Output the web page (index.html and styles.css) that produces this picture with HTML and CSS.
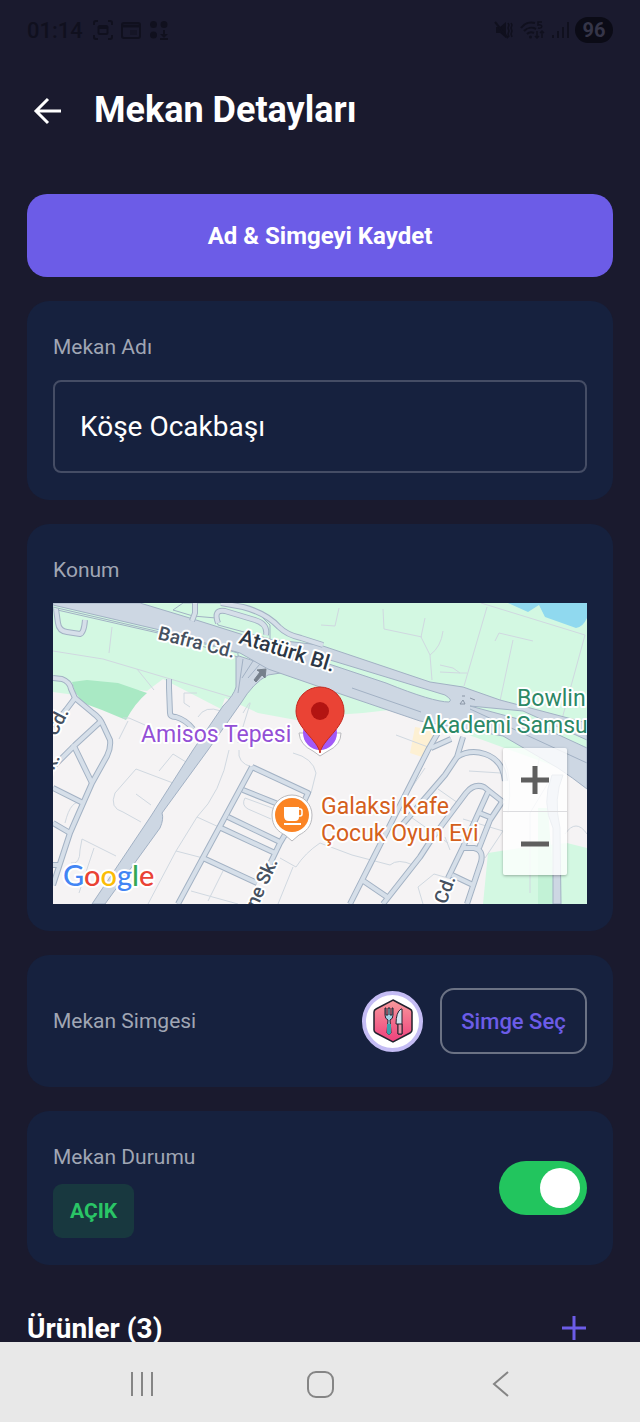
FILE: index.html
```html
<!DOCTYPE html>
<html lang="tr">
<head>
  <meta charset="UTF-8" />
  <meta name="viewport" content="width=device-width, initial-scale=1.0" />
  <title>Mekan Detayları</title>
  <link rel="stylesheet" href="styles.css">
</head>
<body>
  <!-- Status Bar -->
  <div class="status-bar">
    <div class="status-left">
      <span class="time">01:14</span>
      <svg width="22" height="22" viewBox="0 0 22 22" fill="none" stroke="currentColor" stroke-width="2">
        <path d="M2 6V4a2 2 0 0 1 2-2h2M16 2h2a2 2 0 0 1 2 2v2M20 16v2a2 2 0 0 1-2 2h-2M6 20H4a2 2 0 0 1-2-2v-2" />
        <rect x="6.500" y="7" width="9" height="8" rx="1.500" />
        <path d="M7 9h8" />
      </svg>
      <svg width="22" height="22" viewBox="0 0 22 22" fill="none" stroke="currentColor" stroke-width="2">
        <rect x="2" y="4" width="18" height="15" rx="2" />
        <path d="M2 7h18" stroke-width="3" />
        <rect x="10" y="11" width="7" height="5" fill="currentColor" stroke="none" opacity="0.5" />
      </svg>
      <svg width="22" height="22" viewBox="0 0 22 22" fill="currentColor">
        <circle cx="5.500" cy="5.500" r="3.500" />
        <circle cx="16" cy="5.500" r="3.500" />
        <circle cx="5.500" cy="16" r="3.500" />
        <path d="M15 11h2v4h3l-4 4-4-4h3zM12 19h8v2h-8z" />
      </svg>
    </div>
    <div class="status-right">
      <svg width="20" height="22" viewBox="0 0 20 22" fill="currentColor">
        <path d="M3 8h4l6-5v16l-6-5H3z" />
        <path d="M2 3l13 16" stroke="currentColor" stroke-width="2" />
        <path d="M15 4l1 2-1 3 1 3-1 3 1 3M18 4l1 2-1 3 1 3-1 3 1 3" fill="none" stroke="currentColor" stroke-width="1.500" />
      </svg>
      <svg width="26" height="22" viewBox="0 0 26 22" fill="none" stroke="currentColor" stroke-width="2">
        <path d="M2 9a13 13 0 0 1 14-5M5 12a10 10 0 0 1 12-2M8 15a6 6 0 0 1 7-1" />
        <circle cx="11.500" cy="18" r="1.500" fill="currentColor" stroke="none" />
        <path d="M23 3h-4v3c5-1 5 4 0 3M18 12v7M16 17l2 2 2-2M23 19v-7M21 14l2-2 2 2" stroke-width="1.500" />
      </svg>
      <svg width="18" height="22" viewBox="0 0 18 22" stroke="currentColor" stroke-width="2">
        <path d="M2 19v-3M7 19v-7M12 19V8M17 19V3" />
      </svg>
      <span class="battery">96</span>
    </div>
  </div>

  <!-- Header -->
  <header class="header">
    <a href="#" class="back-btn" aria-label="Geri">
      <svg width="32" height="32" viewBox="0 0 32 32" fill="none" stroke="#fff" stroke-width="3">
        <path d="M29 17H4M16 5L4 17l12 12" />
      </svg>
    </a>
    <h1 class="title">Mekan Detayları</h1>
  </header>

  <main class="content">
    <button type="button" class="save-btn">Ad &amp; Simgeyi Kaydet</button>

    <!-- Name -->
    <section class="card">
      <label class="label" for="place-name">Mekan Adı</label>
      <input type="text" id="place-name" class="name-input" value="Köşe Ocakbaşı">
    </section>

    <!-- Location -->
    <section class="card">
      <h2 class="label">Konum</h2>
      <div class="map">
        <svg class="map-svg" viewBox="0 0 534 301" preserveAspectRatio="xMidYMid slice">
          <defs>
            <g id="streets">
              <path d="M0 75L9 76Q17 79 18 86L22 95L40 110Q47 115 50 122L57 137Q58 145 54 153L39 180L17 230L0 282" />
              <path d="M22 95L13 107L0 123M47 119L22 142L0 164M20 141L39 180M0 185L30 200M0 220L17 230M0 262H5" />
              <path d="M116 76V85L117 110Q117 114 123 114Q133 117 140 126" />
              <path d="M199 164L255 190L248 205L227 240L215 265M199 164L125 301M190 187L230 203M175 214L227 239M168 225L222 250M150 255L204 280" />
              <path d="M386 128L375 147L297 301M410 134L404 154L392 172L349 222M309 277L334 294" />
              <path d="M378 145L398 136M404 154Q417 146 432 151Q450 157 452 178" />
              <path d="M330 301L367 254L380 234L413 190Q421 180 431 184L450 199" />
              <path d="M435 189L410 244L395 275M449 199L437 217L426 245M424 209L439 215M410 245H421Q431 247 428 259L414 301M399 272L420 282" />
            </g>
            <g id="ramps">
              <path d="M3 6L5 20Q6 28 14 29L27 31Q31 30 32 17M142 0V10L139 18M165 20Q160 6 172 8L202 17Q215 21 213 32" />
              <path d="M168 0L190 4Q213 10 226 24Q234 32 248 35L270 42" />
            </g>
          </defs>

          <!-- land and parks -->
          <rect width="534" height="301" fill="#f5f3f4" />
          <path d="M0 0H534V175L345 106L310 110L267 113L243 117L205 110L172 95L168 106L110 76L94 88L20 80L22 92L0 89Z" fill="#d3f8e2" />
          <path d="M19 79L34 77L65 80L94 90Q82 100 73 117L49 107L30 100L22 89Z" fill="#a9e9c4" />
          <path d="M435 250L467 245L514 240L534 245V301H430Z" fill="#d3f8e2" />
          <path d="M485 205H495L502 301H485Z" fill="#c2f2d6" />
          <path d="M455 0L475 9L486 2L492 14L523 25Q530 24 534 15V0Z" fill="#90d9ef" />
          <path d="M362 124L386 128L372 155L357 150Z" fill="#fdf0d3" />

          <!-- paths and parcels -->
          <g class="lane">
            <path d="M59 24L56 50M0 48L50 56L178 94M84 66L101 87M144 90H131V100L137 104M145 114Q152 102 168 108M190 110Q200 93 196 104L185 140M70 115H76L92 122M75 118L66 136" />
            <path d="M330 6L331 26L369 34M372 15L368 34L377 52L379 77M390 28Q388 44 377 52M387 62L400 65L407 70L387 69M407 70H414M434 4L411 83M428 0L532 32L509 116M442 38L446 30L480 38M460 37L447 98M268 22L282 23L286 5" />
            <path d="M83 166L120 180M83 166L62 190Q56 205 70 209L88 219M106 168L120 151L133 159M83 191L98 202M18 260Q27 262 27 247L29 236L63 253M41 245L26 290M12 220Q18 195 30 200" />
            <path d="M176 147Q168 190 144 214L123 248L95 301M144 214L168 225M123 248L150 255M170 268L155 298M138 288L185 301M192 195Q188 202 195 206L218 216M192 195L222 206M186 147Q184 160 199 164M240 150Q260 155 263 170L258 190" />
            <path d="M227 255L243 264Q252 250 267 240L299 252L337 262Q345 255 360 262M240 264L225 301M343 132L375 144M385 186L405 200M355 190L372 165M416 168L448 170M410 216L450 228L432 255M370 301L365 284L381 271L395 275M345 205L395 240M392 234L397 247" />
            <path d="M451 157Q460 175 455 210M495 180L477 210V290M512 231Q523 215 534 231M488 147L481 180" />
          </g>

          <!-- streets: casing first, then fill -->
          <use href="#streets" class="street-casing" />
          <use href="#streets" class="street-fill" />

          <g class="highway">
            <path d="M183 52L183 84Q181 92 170 103L140 147L98 213L39 301H52L107 225Q111 216 109 210L155 147L188 100Q200 80 215 72L234 69Z" />
            <path d="M499 172Q488 200 500 225V301H508L507 225Q500 195 510 172Z" />
            <path d="M38 0H87L140 16L197 34L267 42L377 79L410 84L447 97L534 120V186Q520 175 505 165L450 133L367 118L267 84L215 66L187 50L107 27L0 2V0Z" />
          </g>
          <g class="median">
            <path d="M277 57L333 74L392 92Q400 97 396 99Q380 99 333 80L270 59Z" />
            <path d="M417 103L470 108L534 137V145L480 120Z" />
            <path d="M130 0H170L200 5L217 22V36L165 22L163 15L140 13L120 7Z" />
            <path d="M0 6L105 30L165 48L185 54V50L107 29L0 4Z" />
          </g>
          <use href="#ramps" class="street-casing" />
          <use href="#ramps" class="street-fill" />
          <path d="M299 85L368 109M417 106L534 160M190 56L185 90M200 58L189 75M207 61L195 75" fill="none" stroke="#a2b1c4" />
          <path d="M201 77L207 69L204 67L213 66L212 75L209 72L203 79Z" fill="#76808c" stroke="#76808c" />
          <path d="M409 93h3M417 95l5 2M407 101l3-4 2 4z" fill="none" stroke="#8995a5" />

          <!-- street names -->
          <g class="street-name">
            <text transform="translate(104 36) rotate(14)">Bafra Cd.</text>
            <text transform="translate(185 40) rotate(17)" class="main-street">Atatürk Bl.</text>
            <text transform="translate(3 134) rotate(-62)">Cd.</text>
            <text transform="translate(-5 178) rotate(-62)">Sk.</text>
            <text transform="translate(204 306) rotate(-66)">ne Sk.</text>
            <text transform="translate(393 302) rotate(-70)">Cd.</text>
          </g>

          <!-- places -->
          <g class="place">
            <text x="88" y="139" fill="#9350d6">Amisos Tepesi</text>
            <text x="464" y="103" fill="#2c8866">Bowlin</text>
            <text x="368" y="130" fill="#2c8866">Akademi Samsu</text>
            <text x="268" y="211" fill="#d4601c">Galaksi Kafe</text>
            <text x="268" y="238" fill="#d4601c">Çocuk Oyun Evi</text>
          </g>

          <path d="M246 130Q247 142 260 148L267 153L275 148Q288 142 288 130Z" fill="#fff" stroke="#b9b9bd" />
          <circle cx="267" cy="130" r="17" fill="#a259f7" />
          <path d="M267 150C265 137 243 125 243 108A24 24 0 0 1 291 108C291 125 269 137 267 150Z" fill="#ea4335" stroke="#c5291f" />
          <circle cx="267" cy="108" r="9" fill="#b31412" />

          <path d="M239 192A20 20 0 0 1 259 212C259 224 252 229 246 232L239 238L232 232C226 229 219 224 219 212A20 20 0 0 1 239 192Z" fill="#fff" stroke="#b9b9bd" />
          <circle cx="239" cy="212" r="17" fill="#fb8424" />
          <path d="M231 204H246V214Q246 218 242 218H236Q231 218 231 213ZM231 220H248V222H231Z" fill="#fff" />
          <rect x="244" y="206" width="5" height="7" rx="2" fill="none" stroke="#fff" stroke-width="1.500" />

          <text x="10" y="283" class="map-logo"><tspan fill="#4285f4">G</tspan><tspan fill="#ea4335">o</tspan><tspan fill="#fbbc05">o</tspan><tspan fill="#4285f4">g</tspan><tspan fill="#34a853">l</tspan><tspan fill="#ea4335">e</tspan></text>
        </svg>

        <div class="zoom">
          <button type="button" class="zoom-btn" aria-label="Yakınlaştır">
            <svg width="30" height="30" viewBox="0 0 30 30" stroke="#5f5f5f" stroke-width="5"><path d="M1 15H29M15 1V29" /></svg>
          </button>
          <button type="button" class="zoom-btn" aria-label="Uzaklaştır">
            <svg width="30" height="30" viewBox="0 0 30 30" stroke="#5f5f5f" stroke-width="5"><path d="M1 15H29" /></svg>
          </button>
        </div>
      </div>
    </section>

    <!-- Icon -->
    <section class="card card-row icon-card">
      <h2 class="label">Mekan Simgesi</h2>
      <div class="icon-picker">
        <div class="place-icon">
          <svg width="42" height="46" viewBox="0 0 42 46">
            <defs>
              <linearGradient id="hex-fill" x1="0" y1="0" x2="0" y2="1">
                <stop offset="0" stop-color="#f79a9c" />
                <stop offset="1" stop-color="#ee3f7c" />
              </linearGradient>
            </defs>
            <path d="M21 2L38 11Q40 12 40 14V32Q40 34 38 35L21 44L4 35Q2 34 2 32V14Q2 12 4 11Z" fill="url(#hex-fill)" stroke="#22222e" stroke-width="1.500" />
            <path d="M13 10V17Q13 21 16 22L15 35Q17 38 19 35L18 22Q21 21 21 17V10H20V17H18V10H16V17H14V10Z" fill="#9fd3e6" stroke="#22222e" />
            <path d="M15 26h4v9q-2 3-4 0z" fill="#38a2ad" />
            <path d="M29 11Q24 14 24 26H26V36H30V11Z" fill="#d5e4f1" stroke="#22222e" />
            <path d="M26 26h4v10h-4z" fill="#e991a5" stroke="#22222e" />
          </svg>
        </div>
        <button type="button" class="pick-btn">Simge Seç</button>
      </div>
    </section>

    <!-- Status -->
    <section class="card card-row">
      <div class="status">
        <label class="label" for="place-open">Mekan Durumu</label>
        <span class="badge">AÇIK</span>
      </div>
      <input type="checkbox" id="place-open" class="switch" checked>
    </section>

    <!-- Products -->
    <div class="products-header">
      <h2 class="products-title">Ürünler (3)</h2>
      <button type="button" class="add-btn" aria-label="Ürün ekle">
        <svg width="24" height="24" viewBox="0 0 24 24" stroke="#6c5ce7" stroke-width="3"><path d="M0 12H24M12 0V24" /></svg>
      </button>
    </div>
  </main>

  <!-- Navigation Bar -->
  <nav class="nav-bar">
    <button type="button" class="nav-btn" aria-label="Son uygulamalar">
      <svg width="28" height="28" viewBox="0 0 28 28" stroke="#858585" stroke-width="2"><path d="M4 2V26M14 2V26M24 2V26" /></svg>
    </button>
    <button type="button" class="nav-btn" aria-label="Ana ekran">
      <svg width="28" height="28" viewBox="0 0 28 28" fill="none" stroke="#858585" stroke-width="2"><rect x="2" y="2" width="25" height="25" rx="8" /></svg>
    </button>
    <button type="button" class="nav-btn" aria-label="Geri dön">
      <svg width="28" height="28" viewBox="0 0 28 28" fill="none" stroke="#858585" stroke-width="2"><path d="M24 2L10 14L24 26" /></svg>
    </button>
  </nav>
</body>
</html>
```
FILE: styles.css
```css
* { box-sizing: border-box; margin: 0; padding: 0; }
body {
  background: #1a1a2e;
  height: 100vh;
  display: flex; flex-direction: column;
  font-family: Roboto, sans-serif;
  color: #fff;
}
button, input { font-family: inherit; }
button { border: none; background: none; cursor: pointer; }
svg { display: block; }

/* Status bar */
.status-bar {
  flex: none; height: 60px;
  padding: 0 27px;
  display: flex; justify-content: space-between; align-items: center;
  color: #10101e;
}
.status-left, .status-right { display: flex; align-items: center; gap: 6px; }
.time { font-size: 22px; font-weight: 500; margin-right: 3px; }
.battery {
  width: 38px; height: 26px; line-height: 26px;
  border-radius: 13px;
  background: #0b0b16; color: #353548;
  font-size: 20px; font-weight: 700; text-align: center;
}

/* Header */
.header {
  flex: none; height: 100px;
  padding: 0 32px;
  display: flex; align-items: center; gap: 30px;
}
.title { font-size: 36px; font-weight: 700; line-height: 48px; }

.content {
  flex: 1; min-height: 0;
  overflow-y: auto; scrollbar-width: none;
  padding: 34px 27px 0;
  display: flex; flex-direction: column; gap: 24px;
}
.content > * { flex: none; }

.save-btn {
  height: 83px;
  border-radius: 20px;
  background: #6c5ce7; color: #fff;
  font-size: 24px; font-weight: 700;
}

/* Cards */
.card {
  padding: 27px 26px;
  border-radius: 22px;
  background: #16213e;
}
.card-row { display: flex; justify-content: space-between; align-items: center; }
.label {
  display: block;
  font-size: 21px; font-weight: 400; line-height: 38px;
  color: #a0a6b4;
}
.name-input {
  display: block;
  width: 100%; height: 93px;
  margin-top: 14px; padding: 0 25px;
  border: 2px solid #454d65; border-radius: 8px;
  background: transparent; color: #fff;
  font-size: 28px;
}

/* Map */
.map {
  position: relative;
  height: 301px; margin-top: 14px;
  overflow: hidden;
}
.map-svg { width: 100%; height: 100%; }
.lane { fill: none; stroke: #d0d8e0; stroke-width: 1; }
.street-casing, .street-fill { fill: none; stroke-linejoin: round; }
.street-casing { stroke: #a3b2c4; stroke-width: 6; }
.street-fill { stroke: #d6dfe9; stroke-width: 4; }
.highway { fill: #cdd7e3; stroke: #a2b1c4; }
.median { fill: #d3f8e2; stroke: #a2b1c4; }
.street-name { font-size: 19px; font-weight: 500; fill: #465160; }
.main-street { font-size: 21px; fill: #2c3745; }
.place { font-size: 23px; }
.street-name, .place, .map-logo {
  stroke: #fff; stroke-width: 4px; stroke-linejoin: round;
  paint-order: stroke;
}
.map-logo { font-family: Lato, sans-serif; font-size: 29px; font-weight: 500; }
.zoom {
  position: absolute; right: 20px; bottom: 29px;
  width: 64px;
  border-radius: 2px;
  background: rgba(255,255,255,0.8);
  box-shadow: 0 1px 3px rgba(0,0,0,0.3);
}
.zoom-btn {
  width: 100%; height: 63px;
  display: flex; align-items: center; justify-content: center;
}
.zoom-btn + .zoom-btn { height: 64px; border-top: 1px solid #dcdcdf; }

/* Icon picker */
.icon-card { padding: 33px 26px; }
.icon-picker { display: flex; align-items: center; gap: 17px; }
.place-icon {
  width: 61px; height: 61px;
  border: 4px solid #c4bcf4; border-radius: 50%;
  background: #fff;
  display: flex; align-items: center; justify-content: center;
}
.pick-btn {
  width: 147px; height: 66px;
  border: 2px solid #6b7284; border-radius: 14px;
  color: #6c5ce7;
  font-size: 22px; font-weight: 500;
}

/* Open / closed */
.status { display: flex; flex-direction: column; align-items: flex-start; }
.badge {
  height: 54px; line-height: 54px;
  margin-top: 8px; padding: 0 17px;
  border-radius: 9px;
  background: #18383f; color: #2ac566;
  font-size: 21px; font-weight: 700;
}
.switch {
  appearance: none;
  width: 88px; height: 54px;
  padding: 7px;
  border-radius: 27px;
  background: #4a5168;
  display: flex; align-items: center;
  cursor: pointer;
}
.switch::before {
  content: '';
  width: 40px; height: 40px;
  border-radius: 50%;
  background: #fff;
}
.switch:checked { background: #22c55e; justify-content: flex-end; }

/* Products */
.products-header {
  height: 78px;
  padding-right: 27px;
  display: flex; justify-content: space-between; align-items: center;
}
.products-title { font-size: 28px; font-weight: 700; }

/* Navigation bar */
.nav-bar {
  flex: none; height: 80px;
  padding: 4px 53px 0;
  background: #e8e8e8;
  display: flex; align-items: center;
}
.nav-btn { flex: 1; height: 100%; display: flex; align-items: center; justify-content: center; }
```
